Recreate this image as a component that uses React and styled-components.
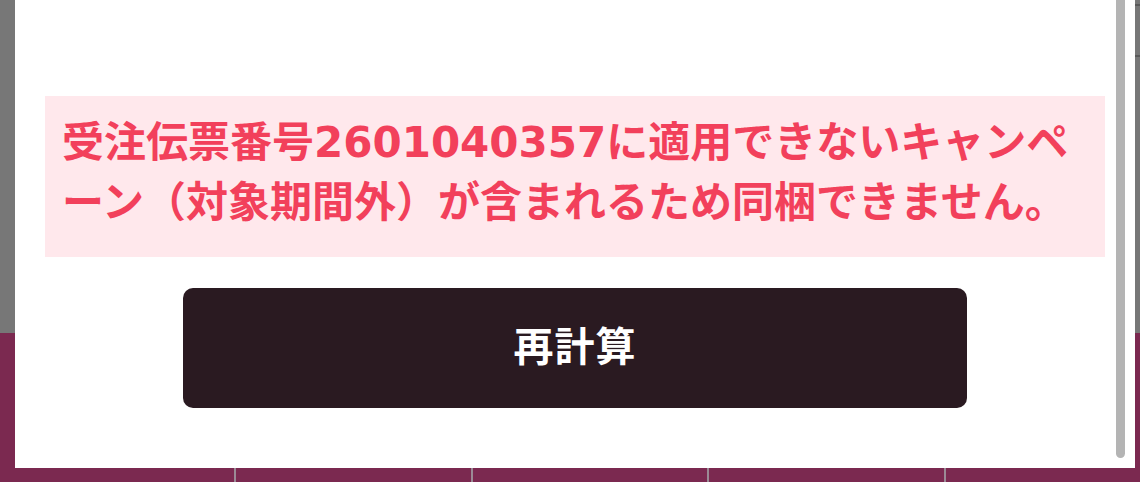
import React from "react";
import styled, { createGlobalStyle } from "styled-components";

const Global = createGlobalStyle`
  html, body { margin: 0; padding: 0; }
  body {
    width: 1140px;
    height: 482px;
    overflow: hidden;
    font-family: "Noto Sans CJK JP", "Noto Sans", sans-serif;
  }
`;

const Page = styled.div`
  position: relative;
  width: 1140px;
  height: 482px;
  display: flex;
  flex-direction: column;
  overflow: hidden;
`;

const Header = styled.div`
  height: 333px;
  background: #777777;
  display: flex;
  flex-direction: column;
  align-items: flex-end;
  gap: 49px;
  padding-top: 4px;
  box-sizing: border-box;
`;

const HeaderRule = styled.div`
  width: 40px;
  height: 2px;
  background: #5a5a5a;
`;

const Footer = styled.div`
  flex: 1;
  background: #7b2950;
  display: flex;
  flex-direction: column;
  justify-content: flex-end;
`;

const TabBar = styled.div`
  height: 16px;
  display: grid;
  grid-template-columns: 234px 237px 236px 237px 1fr;
`;

const Tab = styled.div`
  background: #7b2950;
  border-left: ${(p) => (p.$first ? "none" : "2px solid #9b8a95")};
`;

const Modal = styled.div`
  position: absolute;
  left: 15px;
  top: 0;
  width: 1120px;
  height: 468px;
  background: #ffffff;
  box-sizing: border-box;
  padding: 96px 30px 0;
  display: flex;
  flex-direction: column;
  align-items: center;
`;

const Alert = styled.div`
  align-self: stretch;
  box-sizing: border-box;
  height: 161px;
  background: #ffe8ec;
  color: #f2405b;
  font-family: "DejaVu Sans", "Noto Sans CJK JP", sans-serif;
  font-size: 42px;
  font-weight: 700;
  line-height: 60px;
  padding: 17px 17px 0;
  line-break: anywhere;
  word-break: break-all;
`;

const Button = styled.button`
  margin-top: 31px;
  width: 784px;
  height: 120px;
  border: none;
  border-radius: 10px;
  background: #2a1a21;
  color: #ffffff;
  font-family: "Noto Sans CJK JP", "Noto Sans", sans-serif;
  font-size: 40px;
  font-weight: 700;
  letter-spacing: 1px;
  padding: 0 0 9px;
  display: flex;
  align-items: center;
  justify-content: center;
  cursor: pointer;
`;

const ScrollThumb = styled.div`
  position: absolute;
  right: 10px;
  top: -20px;
  width: 9px;
  height: 478px;
  border-radius: 5px;
  background: #b4b4b4;
`;

export default function App() {
  return (
    <>
      <Global />
      <Page>
        <Header>
          <HeaderRule />
          <HeaderRule />
        </Header>
        <Footer>
          <TabBar>
            <Tab $first />
            <Tab />
            <Tab />
            <Tab />
            <Tab />
          </TabBar>
        </Footer>
        <Modal>
          <Alert>
            受注伝票番号2601040357に適用できないキャンペーン（対象期間外）が含まれるため同梱できません。
          </Alert>
          <Button>再計算</Button>
          <ScrollThumb />
        </Modal>
      </Page>
    </>
  );
}
